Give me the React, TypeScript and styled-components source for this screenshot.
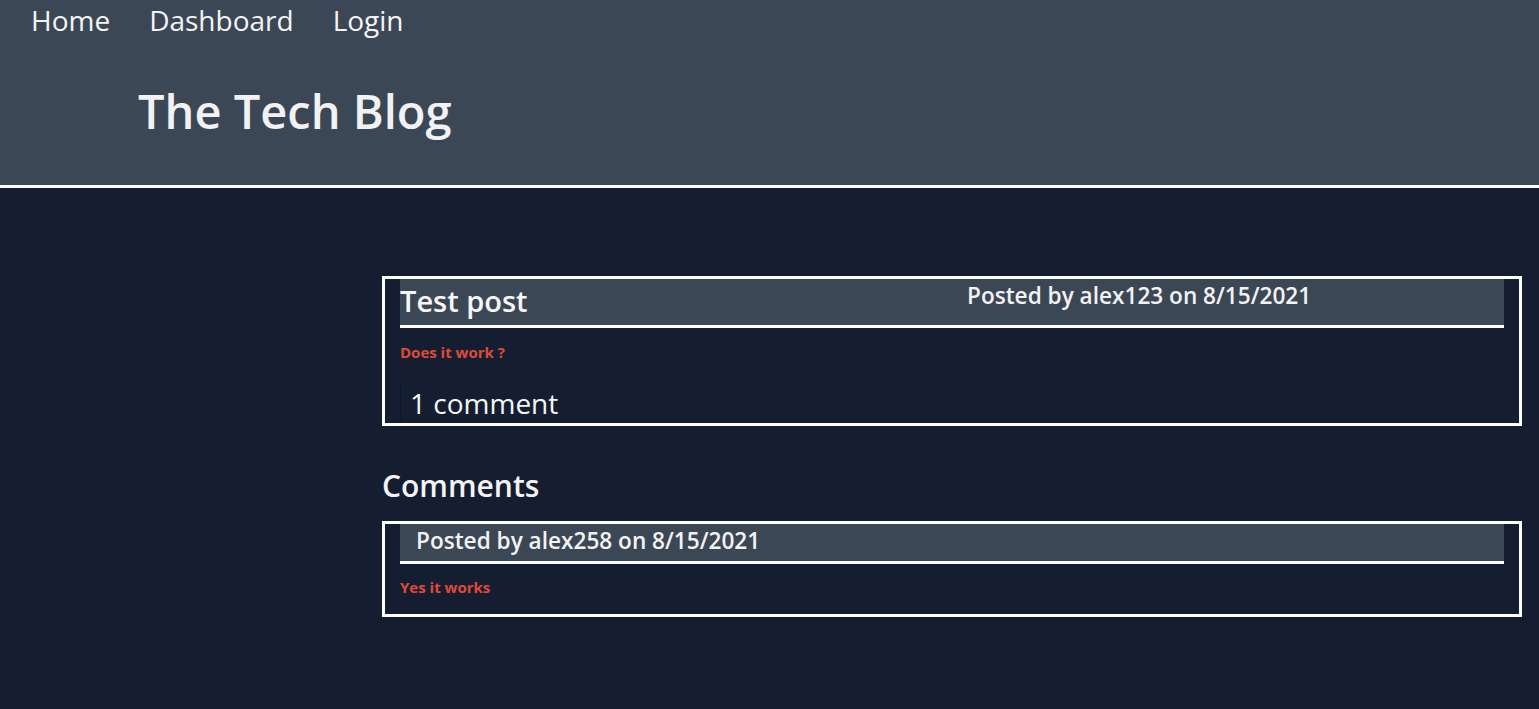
import React from "react";
import styled, { createGlobalStyle } from "styled-components";

const Global = createGlobalStyle`
  html, body {
    margin: 0;
    padding: 0;
    background: #141e30;
    font-family: "Open Sans", "Noto Sans", sans-serif;
    color: #f3f3f5;
  }
  * { box-sizing: border-box; }
`;

const Header = styled.header`
  background: #3c4756;
  height: 188px;
  border-bottom: 3px solid #ffffff;
  display: flex;
  flex-direction: column;
`;

const Nav = styled.nav`
  display: flex;
  gap: 39px;
  padding-left: 31px;
  height: 40px;
  align-items: center;
`;

const NavLink = styled.a`
  font-size: 28px;
  color: #f5f5f7;
  text-decoration: none;
  line-height: 40px;
`;

const Title = styled.h1`
  margin: 39px 0 0 138px;
  font-size: 47px;
  font-weight: 600;
  line-height: 64px;
  color: #f2f2f4;
`;

const Main = styled.main`
  padding: 88px 17px 60px 382px;
  display: flex;
  flex-direction: column;
`;

const Card = styled.section`
  border: 3px solid #ffffff;
  padding: 0 15px;
  display: flex;
  flex-direction: column;
`;

const Bar = styled.div<{ $h: number }>`
  background: #3c4756;
  border-bottom: 3px solid #ffffff;
  height: ${(p) => p.$h}px;
  display: grid;
  grid-template-columns: 1fr 1fr;
  align-items: start;
`;

const PostTitle = styled.h2`
  margin: 0;
  font-size: 29px;
  font-weight: 600;
  line-height: 44px;
  color: #f7f7f8;
`;

const Meta = styled.div<{ $pad: number }>`
  padding: 0 15px 0 ${(p) => p.$pad}px;
  font-size: 22.6px;
  font-weight: 600;
  line-height: 34px;
  color: #f3f3f5;
  white-space: nowrap;
`;

const Body = styled.p<{ $mt: number; $mb: number }>`
  margin: ${(p) => p.$mt}px 0 ${(p) => p.$mb}px;
  font-size: 15px;
  font-weight: 700;
  line-height: 20px;
  color: #e0493a;
`;

const CommentCount = styled.a`
  display: block;
  font-size: 28px;
  line-height: 36px;
  color: #f5f5f7;
  text-decoration: none;
  padding-left: 9px;
  margin-bottom: 2px;
  border-left: 1px solid #0f1626;
  align-self: flex-start;
`;

const Heading = styled.h3`
  margin: 40px 0 15px 0;
  font-size: 30px;
  font-weight: 600;
  line-height: 40px;
  color: #f3f3f5;
`;

export default function App() {
  return (
    <>
      <Global />
      <Header>
        <Nav>
          <NavLink href="#">Home</NavLink>
          <NavLink href="#">Dashboard</NavLink>
          <NavLink href="#">Login</NavLink>
        </Nav>
        <Title>The Tech Blog</Title>
      </Header>
      <Main>
        <Card>
          <Bar $h={49}>
            <PostTitle>Test post</PostTitle>
            <Meta $pad={15}>Posted by alex123 on 8/15/2021</Meta>
          </Bar>
          <Body $mt={14} $mb={23}>Does it work ?</Body>
          <CommentCount href="#">1 comment</CommentCount>
        </Card>
        <Heading>Comments</Heading>
        <Card>
          <Bar $h={40}>
            <Meta $pad={16}>Posted by alex258 on 8/15/2021</Meta>
          </Bar>
          <Body $mt={13} $mb={17}>Yes it works</Body>
        </Card>
      </Main>
    </>
  );
}
